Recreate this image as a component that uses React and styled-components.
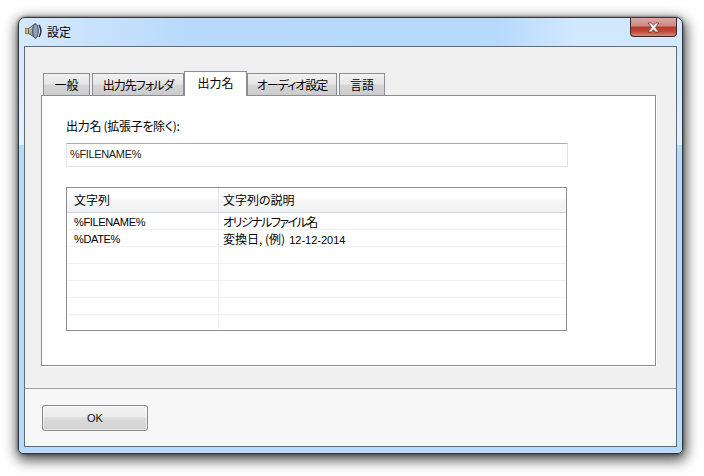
import React from "react";
import styled, { createGlobalStyle } from "styled-components";

const Global = createGlobalStyle`
  html, body { margin: 0; padding: 0; background: #fff; }
  body { font-family: "Liberation Sans", "Noto Sans CJK JP", sans-serif; font-size: 12px; color: #000; overflow: hidden; }
`;

const jpFont = `
  font-family: "Noto Sans CJK JP", sans-serif;
  font-feature-settings: "palt";
  font-size: 12px;
`;

const Page = styled.div`
  width: 704px;
  height: 476px;
  box-sizing: border-box;
  padding: 17px 21px 22px 18px;
  display: flex;
`;

const Win = styled.div`
  flex: 1;
  display: flex;
  flex-direction: column;
  box-sizing: border-box;
  border: 1px solid #33363b;
  border-radius: 7px 7px 5px 5px;
  padding: 0 5px 6px;
  background:
    linear-gradient(to right, #d6e9fd 0%, #d0e6fc 5%, #b8d9fb 26%, #b6d9fc 72%, #d2e8fe 84%, #d2e8fe 100%) top / 100% 28px no-repeat,
    linear-gradient(#d0e7fe 0, #e3f1ff 127px, #b8dbfd 127px);
  box-shadow: 0 0 3px rgba(0,0,0,.6), 1px 4px 13px 2px rgba(0,0,0,.72);
`;

const TitleBar = styled.div`
  height: 28px;
  flex: none;
  display: flex;
  align-items: flex-start;
  justify-content: space-between;
`;

const TitleGroup = styled.div`
  display: flex;
  align-items: center;
  gap: 5px;
  height: 26px;
  padding-left: 1px;
  ${jpFont}
`;

const CloseBtn = styled.div`
  width: 47px;
  height: 19px;
  box-sizing: border-box;
  border: 1px solid #4a2525;
  border-top: none;
  border-radius: 0 0 4px 4px;
  background: linear-gradient(#dca8a2 0%, #cc8a82 45%, #b8392a 50%, #c14a38 75%, #d08a7c 100%);
  display: flex;
  align-items: center;
  justify-content: center;
`;

const Client = styled.div`
  flex: 1;
  display: flex;
  flex-direction: column;
  border: 1px solid #5f6c7a;
  background: #f0f0f0;
  min-height: 0;
`;

const Upper = styled.div`
  flex: 1;
  box-sizing: border-box;
  padding: 25px 20px 22px 16px;
  display: flex;
  flex-direction: column;
`;

const TabRow = styled.div`
  display: flex;
  align-items: flex-end;
  padding-left: 2px;
  height: 24px;
  flex: none;
  margin-bottom: -1px;
  position: relative;
  z-index: 1;
`;

const Tab = styled.div`
  box-sizing: border-box;
  width: ${(p) => p.$w}px;
  margin-right: ${(p) => (p.$gap ? 2 : 0)}px;
  height: ${(p) => (p.$active ? 25 : 23)}px;
  border: 1px solid #8a8e94;
  border-bottom: ${(p) => (p.$active ? "none" : "1px solid #8a8e94")};
  background: ${(p) => (p.$active ? "#fff" : "linear-gradient(#f2f2f2, #e6e6e6 45%, #d6d6d6 55%, #cbcbcb)")};
  display: flex;
  align-items: center;
  justify-content: center;
  padding-top: ${(p) => (p.$active ? 0 : 1)}px;
  padding-bottom: ${(p) => (p.$active ? 2 : 0)}px;
  ${jpFont}
  letter-spacing: ${(p) => p.$ls || 0}px;
  line-height: 1;
  white-space: nowrap;
`;

const Panel = styled.div`
  flex: 1;
  box-sizing: border-box;
  border: 1px solid #8c8c8c;
  background: #fff;
  box-shadow: 1px 1px 0 #fff;
  padding: 21px 87px 0 24px;
  display: flex;
  flex-direction: column;
`;

const FieldLabel = styled.div`
  height: 17px;
  line-height: 17px;
  ${jpFont}
  letter-spacing: -0.3px;
`;

const Input = styled.div`
  margin-top: 9px;
  height: 24px;
  box-sizing: border-box;
  width: 502px;
  border: 1px solid #e2e3ea;
  border-top-color: #abadb3;
  padding: 0 3px;
  line-height: 20px;
  font-size: 11px;
  letter-spacing: -0.35px;
  color: #222;
`;

const Table = styled.div`
  margin-top: 20px;
  width: 501px;
  height: 144px;
  box-sizing: border-box;
  border: 1px solid #8e8e8e;
  display: flex;
  flex-direction: column;
  overflow: hidden;
`;

const Head = styled.div`
  height: 25px;
  flex: none;
  box-sizing: border-box;
  display: grid;
  grid-template-columns: 152px 1fr;
  border-bottom: 1px solid #d5d5d5;
  background: linear-gradient(#fff 0%, #fff 45%, #f5f6f7 50%, #f1f2f4 100%);
`;

const HeadCell = styled.div`
  ${jpFont}
  line-height: 24px;
  padding-left: ${(p) => p.$pad}px;
  border-right: ${(p) => (p.$last ? "none" : "1px solid #e3e5e7")};
`;

const Row = styled.div`
  height: 17px;
  flex: none;
  box-sizing: border-box;
  display: grid;
  grid-template-columns: 152px 1fr;
  border-bottom: 1px solid #f0f0f0;
`;

const Cell = styled.div`
  font-size: 11px;
  line-height: 18px;
  padding-left: ${(p) => p.$pad}px;
  border-right: ${(p) => (p.$last ? "none" : "1px solid #f0f0f0")};
  white-space: nowrap;
  letter-spacing: ${(p) => (p.$last ? "0" : "-0.35px")};
`;

const Jp = styled.span`
  ${jpFont}
  letter-spacing: ${(p) => p.$ls || 0}px;
`;

const DateText = styled.span`
  margin-left: 1px;
`;

const Footer = styled.div`
  height: 58px;
  flex: none;
  box-sizing: border-box;
  background: #f7f7f7;
  box-shadow: inset 0 1px 0 #a0a0a0;
  padding: 17px 0 0 17px;
`;

const OkButton = styled.div`
  width: 106px;
  height: 26px;
  box-sizing: border-box;
  border: 1px solid #8a8a8a;
  border-radius: 3px;
  background: linear-gradient(#f3f3f3 0%, #ececec 45%, #dcdcdc 50%, #d2d2d2 100%);
  box-shadow: inset 0 0 0 1px rgba(255,255,255,.55);
  text-align: center;
  line-height: 24px;
  font-size: 11px;
  color: #111;
`;

const Speaker = () => (
  <svg width="17" height="16" viewBox="0 0 17 16" aria-hidden="true">
    <defs>
      <linearGradient id="cone" x1="0" y1="0" x2="1" y2="1">
        <stop offset="0" stopColor="#d4d9e0" />
        <stop offset="1" stopColor="#5f6977" />
      </linearGradient>
    </defs>
    <rect x="0.5" y="5.5" width="3.5" height="5" fill="#eab52c" stroke="#7a6830" strokeWidth=".7" />
    <path d="M3.5 5.5 L10 0.8 L11 15.2 L3.5 10.5 Z" fill="url(#cone)" stroke="#474f5b" strokeWidth=".8" />
    <ellipse cx="10.5" cy="8" rx="2.8" ry="7.2" fill="#93a0b2" stroke="#36404f" strokeWidth=".9" />
    <path d="M14 2 C16.2 5.5 16.2 10.5 14 14" fill="none" stroke="#27344a" strokeWidth="1.5" />
  </svg>
);

const CloseIcon = () => (
  <svg width="13" height="11" viewBox="0 0 13 11" aria-hidden="true">
    <path d="M1 1 H4.5 L6.5 3.3 L8.5 1 H12 L8.4 5.5 L12 10 H8.5 L6.5 7.7 L4.5 10 H1 L4.6 5.5 Z" fill="#f4f4f4" stroke="#5a3a3a" strokeWidth=".8" />
  </svg>
);

const tabs = [
  { t: "一般", w: 47, gap: true },
  { t: "出力先フォルダ", w: 92, ls: -1 },
  { t: "出力名", w: 63, active: true },
  { t: "オーディオ設定", w: 90, gap: true, ls: -1 },
  { t: "言語", w: 46 },
];

export default function App() {
  return (
    <Page>
      <Global />
      <Win>
        <TitleBar>
          <TitleGroup>
            <Speaker />
            <span>設定</span>
          </TitleGroup>
          <CloseBtn><CloseIcon /></CloseBtn>
        </TitleBar>
        <Client>
          <Upper>
            <TabRow>
              {tabs.map((x) => (
                <Tab key={x.t} $w={x.w} $gap={x.gap} $active={x.active} $ls={x.ls}>{x.t}</Tab>
              ))}
            </TabRow>
            <Panel>
              <FieldLabel>出力名 (拡張子を除く):</FieldLabel>
              <Input>%FILENAME%</Input>
              <Table>
                <Head>
                  <HeadCell $pad={7}>文字列</HeadCell>
                  <HeadCell $pad={4} $last>文字列の説明</HeadCell>
                </Head>
                <Row>
                  <Cell $pad={7}>%FILENAME%</Cell>
                  <Cell $pad={4} $last><Jp $ls={-1.5}>オリジナルファイル名</Jp></Cell>
                </Row>
                <Row>
                  <Cell $pad={7}>%DATE%</Cell>
                  <Cell $pad={4} $last><Jp>変換日, (例)</Jp> <DateText>12-12-2014</DateText></Cell>
                </Row>
                {[0, 1, 2, 3, 4].map((i) => (
                  <Row key={i}>
                    <Cell $pad={7} />
                    <Cell $pad={4} $last />
                  </Row>
                ))}
              </Table>
            </Panel>
          </Upper>
          <Footer>
            <OkButton>OK</OkButton>
          </Footer>
        </Client>
      </Win>
    </Page>
  );
}
